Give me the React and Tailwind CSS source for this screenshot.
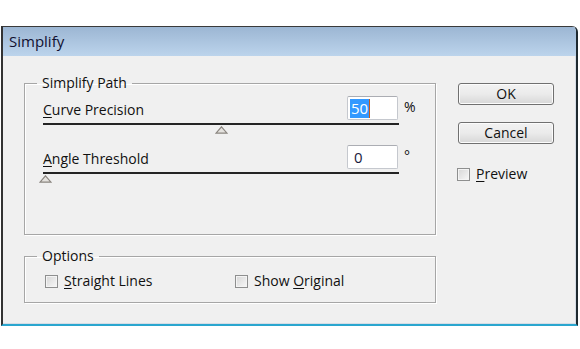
import React from 'react';

const font = { fontFamily: '"Open Sans", "Noto Sans", "DejaVu Sans", sans-serif' };

function Checkbox({ children }) {
    return (
        <label className="flex items-center gap-[6px]">
            <span className="w-[13px] h-[13px] border border-[#8e8f8f] bg-gradient-to-br from-[#d6d6d6] to-[#f8f8f8] shadow-[inset_0_0_0_1px_#f4f4f4]" />
            <span>{children}</span>
        </label>
    );
}

function Button({ children }) {
    return (
        <button className="w-[96px] h-[22px] rounded-[3px] border border-[#707070] bg-gradient-to-b from-[#f2f2f2] via-[#ebebeb] to-[#d7d7d7] shadow-[inset_0_0_0_1px_#fcfcfc] text-[14px] leading-[18px] text-[#111]">
            {children}
        </button>
    );
}

function Group({ title, className, children }) {
    return (
        <fieldset className={`border border-[#a6a6a6] shadow-[inset_1px_1px_0_#fff,1px_1px_0_#fff] p-0 ${className}`}>
            <legend className="ml-[12px] px-[5px] text-[14px] leading-[18px]">{title}</legend>
            {children}
        </fieldset>
    );
}

function SliderRow({ label, hotkey, value, unit, selected, pos }) {
    return (
        <div>
            <div className="flex items-end">
                <div className="flex-1 text-[14px] leading-[18px] pb-[1px]">
                    <u className="underline-offset-2">{hotkey}</u>{label}
                </div>
                <div className="w-[51px] h-[24px] border border-[#c5c8ce] border-t-[#abadb3] rounded-[2px] bg-white flex items-center pl-[2px]">
                    {selected ? (
                        <span className="bg-[#3399ff] text-white text-[15px] leading-[19px] px-[1px] border-r border-[#c85a1a]">{value}</span>
                    ) : (
                        <span className="pl-[4px] text-[15px] leading-[19px] text-[#1a1a40]">{value}</span>
                    )}
                </div>
                <div className="w-[37px] pl-[6px] self-start pt-[2px] text-[14px] leading-[18px]">{unit}</div>
            </div>
            <div className="relative w-[356px] h-[10px] mt-[3px]">
                <div className="h-[2px] bg-[#242424]" />
                <svg
                    className="absolute top-[3px]"
                    style={{ left: `${pos}%`, marginLeft: -6 }}
                    width="13"
                    height="8"
                    viewBox="0 0 13 8"
                >
                    <path d="M6.5 0.8 L12 7.2 L1 7.2 Z" fill="#e4e2de" stroke="#8b8680" strokeWidth="1.2" />
                </svg>
            </div>
        </div>
    );
}

export default function App() {
    return (
        <div className="w-[580px] h-[349px] bg-white pt-[26px] pl-[1px] text-[#111]" style={font}>
            <div className="w-[577px] h-[300px] flex flex-col border-l-2 border-r-2 border-b-2 border-l-[#333] border-r-[#1f2a30] border-b-[#2aa6cf] rounded-tr-[6px] overflow-hidden">
                {/* title bar */}
                <div className="h-[30px] flex items-center pl-[6px] bg-gradient-to-b from-[#9cb6d3] to-[#bcd4ec] border-t border-[#3a3a3a] text-[15px] text-[#101030]">
                    Simplify
                </div>

                {/* body */}
                <div className="flex-1 bg-[#f0f0f0] flex pl-[21px] pt-[18px] border-b border-r border-[#d6dde6]">
                    <div className="w-[412px] flex flex-col">
                        <Group title="Simplify Path" className="h-[161px]">
                            <div className="pl-[18px] pt-[4px] flex flex-col gap-[12px]">
                                <SliderRow label="urve Precision" hotkey="C" value="50" unit="%" selected pos={50} />
                                <SliderRow label="ngle Threshold" hotkey="A" value="0" unit="°" pos={0.6} />
                            </div>
                        </Group>
                        <Group title="Options" className="h-[56px] mt-[12px]">
                            <div className="pl-[20px] flex text-[14px] leading-[18px] pt-[7px]">
                                <div className="w-[190px]">
                                    <Checkbox><u className="underline-offset-2">S</u>traight Lines</Checkbox>
                                </div>
                                <Checkbox>Show <u className="underline-offset-2">O</u>riginal</Checkbox>
                            </div>
                        </Group>
                    </div>

                    <div className="ml-[22px] pt-[9px] flex flex-col">
                        <Button>OK</Button>
                        <div className="mt-[15px]"><Button>Cancel</Button></div>
                        <div className="mt-[21px] -ml-[1px] text-[14px] leading-[18px]">
                            <Checkbox><u className="underline-offset-2">P</u>review</Checkbox>
                        </div>
                    </div>
                </div>
            </div>
        </div>
    );
}
